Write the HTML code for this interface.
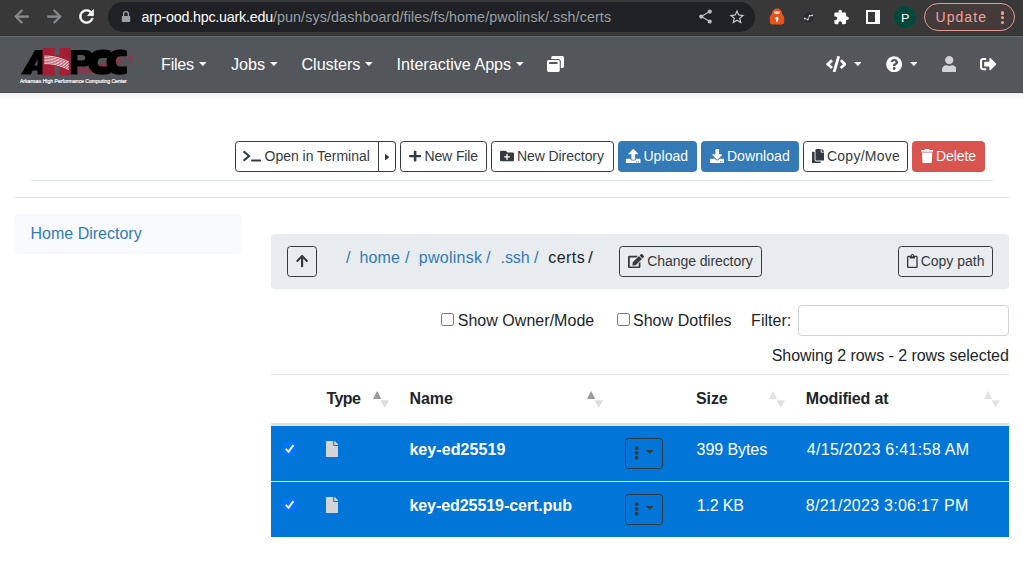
<!DOCTYPE html>
<html>
<head>
<meta charset="utf-8">
<title>Dashboard - Files</title>
<style>
*{box-sizing:border-box;margin:0;padding:0}
html,body{width:1023px;height:581px;overflow:hidden;background:#fff}
body{font-family:"Liberation Sans",sans-serif;font-size:16px;color:#212529;position:relative}
.abs{position:absolute}
.t{position:absolute;white-space:nowrap;line-height:1;font-family:"Liberation Sans",sans-serif}
.box{position:absolute}
.btn{position:absolute;border:1px solid #343a40;border-radius:3.5px;background:#fff}
.caret{position:absolute;width:0;height:0;border-left:4.2px solid transparent;border-right:4.2px solid transparent;border-top:4.4px solid #fff}
.hr{position:absolute;height:1px;background:#dee2e6}
.cb{position:absolute;width:13px;height:13px;border:1px solid #767676;border-radius:2.5px;background:#fff}
.cbc{position:absolute;width:13px;height:13px;border-radius:2.5px;background:#0075ff}
</style>
</head>
<body>

<div class="box" style="left:0;top:0;width:1023px;height:36px;background:#383838"></div>
<div class="box" style="left:0;top:35px;width:1023px;height:1px;background:#313131"></div>
<div class="box" style="left:108px;top:2px;width:647px;height:30px;border-radius:15px;background:#202124"></div>
<svg class="abs" style="left:11.2px;top:6px" width="21" height="21" viewBox="0 0 24 24"><path fill="#8a8b8e" stroke="#8a8b8e" stroke-width="0.6" d="M20 11H7.830l5.590-5.590L12 4l-8 8 8 8 1.410-1.410L7.830 13H20v-2z"/></svg>
<svg class="abs" style="left:44px;top:6px" width="21" height="21" viewBox="0 0 24 24"><path fill="#8a8b8e" stroke="#8a8b8e" stroke-width="0.6" d="M12 4l-1.410 1.410L16.170 11H4v2h12.170l-5.580 5.590L12 20l8-8z"/></svg>
<svg class="abs" style="left:75.5px;top:6.3px" width="21" height="21" viewBox="0 0 24 24"><path fill="#ffffff" stroke="#ffffff" stroke-width="0.7" d="M17.650 6.350C16.200 4.900 14.210 4 12 4c-4.420 0-7.990 3.580-7.990 8s3.570 8 7.990 8c3.730 0 6.840-2.550 7.730-6h-2.080c-.82 2.330-3.040 4-5.650 4-3.310 0-6-2.690-6-6s2.690-6 6-6c1.660 0 3.140.69 4.220 1.780L13 11h7V4l-2.350 2.350z"/></svg>
<svg class="abs" style="left:120px;top:10px" width="12" height="14" viewBox="0 0 12 14"><path fill="#9aa0a6" d="M2.600 5.900h6.800c.5 0 .8.300.8.800v4.500c0 .5-.3.800-.8.800H2.600c-.5 0-.8-.3-.8-.8V6.700c0-.5.300-.800.8-.800z"/><path fill="none" stroke="#9aa0a6" stroke-width="1.300" d="M3.600 6V4a2.400 2.400 0 0 1 4.800 0V6"/></svg>
<svg class="abs" style="left:696.5px;top:8.3px" width="17" height="17" viewBox="0 0 24 24"><path fill="#b9bcc0" stroke="#b9bcc0" stroke-width="0" d="M18 16.080c-.76 0-1.440.3-1.960.77L8.910 12.700c.05-.23.09-.46.09-.7s-.04-.47-.09-.7l7.050-4.110c.54.5 1.250.81 2.040.81 1.660 0 3-1.340 3-3s-1.340-3-3-3-3 1.340-3 3c0 .24.04.47.09.7L8.040 9.810C7.500 9.310 6.790 9 6 9c-1.660 0-3 1.340-3 3s1.340 3 3 3c.79 0 1.500-.31 2.040-.81l7.120 4.160c-.05.21-.08.43-.08.65 0 1.610 1.310 2.920 2.920 2.920 1.610 0 2.920-1.310 2.920-2.920s-1.310-2.920-2.920-2.920z"/></svg>
<svg class="abs" style="left:728px;top:8px" width="18" height="18" viewBox="0 0 24 24"><path fill="#c4c7cb" stroke="#c4c7cb" stroke-width="0" d="M22 9.240l-7.190-.62L12 2 9.190 8.630 2 9.240l5.460 4.730L5.820 21 12 17.270 18.180 21l-1.630-7.030L22 9.240zM12 15.400l-3.760 2.270 1-4.280-3.320-2.880 4.380-.38L12 6.100l1.710 4.040 4.380.38-3.320 2.880 1 4.280L12 15.400z"/></svg>
<svg class="abs" style="left:769px;top:8px" width="16" height="17" viewBox="0 0 16 17"><path fill="#e5541f" d="M2.800 6.500C2.800 2.900 5 0.600 8 0.600s5.200 2.300 5.200 5.900c1.300.5 2 1.600 2 3.100v4.300c0 1.500-1 2.500-2.400 2.500H3.200C1.800 16.400.8 15.400.8 13.900V9.600c0-1.500.7-2.600 2-3.100z"/><rect x="5" y="3.300" width="6" height="2.600" rx="1.300" fill="#f7c9b6"/><circle cx="8" cy="10.300" r="1.500" fill="#fff"/><rect x="7.250" y="10.600" width="1.500" height="3.200" fill="#fff"/></svg>
<svg class="abs" style="left:802px;top:10.500px" width="13" height="13" viewBox="0 0 13 13"><circle cx="6.500" cy="6.500" r="5.700" fill="#2b2c2f" stroke="#46474a" stroke-width=".6"/><path d="M2.800 7.400L5.800 8.600 7.600 4.700 10.200 4.300" fill="none" stroke="#c9c9c9" stroke-width=".9"/><circle cx="2.900" cy="7.400" r=".9" fill="#d8d8d8"/><circle cx="5.800" cy="8.600" r=".9" fill="#d8d8d8"/><circle cx="7.600" cy="4.700" r=".9" fill="#d8d8d8"/><circle cx="10.200" cy="4.300" r=".9" fill="#d8d8d8"/></svg>
<svg class="abs" style="left:832.5px;top:9px" width="16.5" height="16.5" viewBox="0 0 24 24"><path fill="#ffffff" stroke="#ffffff" stroke-width="0" d="M20.500 11H19V7c0-1.100-.9-2-2-2h-4V3.500C13 2.120 11.880 1 10.500 1S8 2.120 8 3.500V5H4c-1.100 0-1.990.9-1.990 2v3.800H3.500c1.490 0 2.700 1.210 2.700 2.700s-1.210 2.700-2.700 2.700H2V20c0 1.100.9 2 2 2h3.800v-1.500c0-1.490 1.210-2.700 2.700-2.700 1.490 0 2.700 1.210 2.700 2.700V22H17c1.100 0 2-.9 2-2v-4h1.500c1.380 0 2.500-1.120 2.500-2.500S21.880 11 20.500 11z"/></svg>
<div class="box" style="left:866px;top:10px;width:14.400px;height:14px;background:#fff"></div>
<div class="box" style="left:868px;top:12px;width:7.200px;height:10px;background:#383838"></div>
<div class="box" style="left:894px;top:6px;width:22.200px;height:22.200px;border-radius:50%;background:#03483d"></div>
<div class="box" style="left:924px;top:3px;width:91px;height:28px;border-radius:14px;border:1px solid #e39c94;background:#453a3a"></div>
<div class="box" style="left:1001.200px;top:11.4px;width:3.200px;height:3.200px;border-radius:50%;background:#f0a198"></div>
<div class="box" style="left:1001.200px;top:16.1px;width:3.200px;height:3.200px;border-radius:50%;background:#f0a198"></div>
<div class="box" style="left:1001.200px;top:20.8px;width:3.200px;height:3.200px;border-radius:50%;background:#f0a198"></div>
<div class="box" style="left:0;top:36px;width:1023px;height:57px;background:#53565a"></div>
<div class="box" style="left:0;top:36px;width:1023px;height:1px;background:#68696b"></div>
<div class="box" style="left:0;top:92px;width:1023px;height:1px;background:#484b4f"></div>
<div class="box" style="left:0;top:93px;width:1023px;height:7px;background:linear-gradient(#f1f1f1,#f6f6f6 30%,#ffffff)"></div>
<svg class="abs" style="left:0;top:36px" width="150" height="57" viewBox="0 36 150 57">
<!-- red swoosh lines behind PCC -->
<path d="M77.300 67.00C88 70.60 98 65.60 106 62.30S124 57.20 133 56.60" stroke="#b3233f" stroke-width="0.700" fill="none"/><path d="M77.300 68.35C88 71.95 98 66.75 106 63.45S124 59.45 133 58.85" stroke="#b3233f" stroke-width="0.700" fill="none"/><path d="M77.300 69.70C88 73.30 98 67.90 106 64.60S124 61.70 133 61.10" stroke="#b3233f" stroke-width="0.700" fill="none"/><path d="M77.300 71.05C88 74.65 98 69.05 106 65.75S124 63.95 133 63.35" stroke="#b3233f" stroke-width="0.700" fill="none"/><path d="M77.300 72.40C88 76.00 98 70.20 106 66.90S124 66.20 133 65.60" stroke="#b3233f" stroke-width="0.700" fill="none"/>
<!-- A -->
<path fill="#000" fill-rule="evenodd" d="M20.900 74.400L35.200 49.900H47V74.400H37.500V70.500H32.700L30.900 74.400ZM34.300 65.600H37.500V59.200Z"/>
<!-- P -->
<path fill="#000" fill-rule="evenodd" d="M70.600 49.900H84.500C90.500 49.900 93.400 53.200 93.400 58.200C93.400 63.200 90.500 66.400 84.500 66.400H77.400V74.400H70.600ZM77.400 54.900V60.400H82.300C84.400 60.400 85.400 59.400 85.400 57.650C85.400 55.900 84.400 54.900 82.300 54.900Z"/>
<!-- C1 -->
<path fill="#000" d="M110.500 57.900V50.600C108 49.900 105.500 49.500 102.500 49.500C93.500 49.500 88 54.500 88 62.200C88 69.900 93.500 74.800 102.500 74.800C105.500 74.800 108 74.400 110.500 73.600V66.600H102C99.300 66.600 97.600 64.900 97.600 62.250C97.600 59.600 99.300 57.900 102 57.900Z"/>
<!-- C2 -->
<path fill="#000" d="M126.900 56.300V50.600C124.800 49.900 122.500 49.500 119.800 49.500C111.500 49.500 106.500 54.500 106.500 62.200C106.500 69.900 111.500 74.800 119.800 74.800C122.500 74.800 124.800 74.400 126.900 73.600V66.600H120.500C117.600 66.600 115.900 64.700 115.900 61.450C115.900 58.200 117.600 56.300 120.500 56.300Z"/>
<!-- H (red) -->
<path fill="#a51e36" d="M42.500 47.900H54.700V55.600H59.600V47.900H70.600V75.600H59.600V66.400H54.700V75.600H42.500Z"/>
<!-- white swoosh lines over H -->
<path d="M44.300 56.10C52 55.90 60 57.60 68.800 61.90" stroke="#f6e3e6" stroke-width="0.95" fill="none"/><path d="M44.300 57.60C52 57.40 60 59.10 68.800 63.45" stroke="#f6e3e6" stroke-width="0.95" fill="none"/><path d="M44.300 59.10C52 58.90 60 60.60 68.800 65.00" stroke="#f6e3e6" stroke-width="0.95" fill="none"/><path d="M44.300 60.60C52 60.40 60 62.10 68.800 66.55" stroke="#f6e3e6" stroke-width="0.95" fill="none"/><path d="M44.300 62.10C52 61.90 60 63.60 68.800 68.10" stroke="#f6e3e6" stroke-width="0.95" fill="none"/><path d="M44.300 63.60C52 63.40 60 65.10 68.800 69.65" stroke="#f6e3e6" stroke-width="0.95" fill="none"/>
<text x="19.900" y="83.300" font-family="Liberation Sans, sans-serif" font-size="5.700" fill="#ffffff" textLength="106.900" lengthAdjust="spacingAndGlyphs" stroke="#ffffff" stroke-width="0.2">Arkansas High Performance Computing Center</text>
</svg>
<svg class="abs" style="left:199.4px;top:62px" width="7.7" height="4.1" viewBox="0 0 7.7 4.1"><path fill="#ffffff" d="M0 0H7.7L3.85 4.1Z"/></svg>
<svg class="abs" style="left:270px;top:62px" width="7.7" height="4.1" viewBox="0 0 7.7 4.1"><path fill="#ffffff" d="M0 0H7.7L3.85 4.1Z"/></svg>
<svg class="abs" style="left:365px;top:62px" width="7.7" height="4.1" viewBox="0 0 7.7 4.1"><path fill="#ffffff" d="M0 0H7.7L3.85 4.1Z"/></svg>
<svg class="abs" style="left:516px;top:62px" width="7.7" height="4.1" viewBox="0 0 7.7 4.1"><path fill="#ffffff" d="M0 0H7.7L3.85 4.1Z"/></svg>
<svg class="abs" style="left:547px;top:56px" width="17" height="16" viewBox="0 0 512 512" preserveAspectRatio="none"><path fill="#ffffff" d="M512 48v288c0 26.500-21.500 48-48 48h-48V176c0-44.100-35.900-80-80-80H128V48c0-26.500 21.500-48 48-48h288c26.500 0 48 21.500 48 48zM384 176v288c0 26.500-21.500 48-48 48H48c-26.500 0-48-21.500-48-48V176c0-26.500 21.500-48 48-48h288c26.500 0 48 21.500 48 48zm-68 28c0-6.600-5.400-12-12-12H76c-6.600 0-12 5.400-12 12v52h252v-52z"/></svg>
<svg class="abs" style="left:825.6px;top:56px" width="20.8" height="16.3" viewBox="0 0 640 512" preserveAspectRatio="none"><path fill="#ffffff" d="M278.900 511.500l-61-17.700c-6.400-1.800-10-8.500-8.200-14.900L346.200 8.700c1.800-6.400 8.500-10 14.900-8.200l61 17.700c6.400 1.800 10 8.500 8.200 14.900L293.800 503.300c-1.900 6.400-8.500 10.100-14.900 8.200zm-114-112.200l43.500-46.400c4.600-4.900 4.300-12.700-.8-17.200L117 256l90.600-79.700c5.100-4.500 5.500-12.300.8-17.200l-43.500-46.400c-4.500-4.800-12.100-5.100-17-.5L3.800 247.200c-5.100 4.700-5.100 12.800 0 17.500l144.100 135.100c4.900 4.600 12.500 4.400 17-.5zm327.200.6l144.100-135.100c5.100-4.700 5.100-12.800 0-17.500L492.100 112.100c-4.800-4.500-12.400-4.300-17 .5L431.600 159c-4.600 4.900-4.300 12.700.8 17.200L523 256l-90.600 79.700c-5.100 4.500-5.500 12.300-.8 17.200l43.500 46.400c4.500 4.900 12.100 5.100 17 .6z"/></svg>
<svg class="abs" style="left:853.8px;top:62px" width="7.7" height="4.1" viewBox="0 0 7.7 4.1"><path fill="#ffffff" d="M0 0H7.7L3.85 4.1Z"/></svg>
<svg class="abs" style="left:885.7px;top:55.8px" width="16.4" height="16.6" viewBox="0 0 512 512" preserveAspectRatio="none"><path fill="#ffffff" d="M504 256c0 136.997-111.043 248-248 248S8 392.997 8 256C8 119.083 119.043 8 256 8s248 111.083 248 248zM262.655 90c-54.497 0-89.255 22.957-116.549 63.758-3.536 5.286-2.353 12.415 2.715 16.258l34.699 26.310c5.205 3.947 12.621 3.008 16.665-2.122 17.864-22.658 30.113-35.797 57.303-35.797 20.429 0 45.698 13.148 45.698 32.958 0 14.976-12.363 22.667-32.534 33.976C247.128 238.528 216 254.941 216 296v4c0 6.627 5.373 12 12 12h56c6.627 0 12-5.373 12-12v-1.333c0-28.462 83.186-29.647 83.186-106.667 0-58.002-60.165-102-116.531-102zM256 338c-25.365 0-46 20.635-46 46 0 25.364 20.635 46 46 46s46-20.636 46-46c0-25.365-20.635-46-46-46z"/></svg>
<svg class="abs" style="left:909.7px;top:62px" width="7.7" height="4.1" viewBox="0 0 7.7 4.1"><path fill="#ffffff" d="M0 0H7.7L3.85 4.1Z"/></svg>
<svg class="abs" style="left:941.7px;top:56px" width="14.5" height="16.3" viewBox="0 0 448 512" preserveAspectRatio="none"><path fill="#d2d3d4" d="M224 256c70.700 0 128-57.300 128-128S294.700 0 224 0 96 57.300 96 128s57.300 128 128 128zm89.600 32h-16.700c-22.200 10.200-46.900 16-72.900 16s-50.600-5.800-72.900-16h-16.700C60.200 288 0 348.200 0 422.400V464c0 26.500 21.500 48 48 48h352c26.500 0 48-21.500 48-48v-41.600c0-74.200-60.200-134.400-134.400-134.400z"/></svg>
<svg class="abs" style="left:979.6px;top:56px" width="16.6" height="16.3" viewBox="0 0 512 512" preserveAspectRatio="none"><path fill="#ffffff" d="M497 273L329 441c-15 15-41 4.500-41-17v-96H152c-13.300 0-24-10.700-24-24v-96c0-13.300 10.700-24 24-24h136V88c0-21.400 25.900-32 41-17l168 168c9.300 9.400 9.300 24.600 0 34zM192 436v-40c0-6.600-5.400-12-12-12H96c-17.700 0-32-14.300-32-32V160c0-17.700 14.300-32 32-32h84c6.600 0 12-5.400 12-12V76c0-6.600-5.400-12-12-12H96c-53 0-96 43-96 96v192c0 53 43 96 96 96h84c6.600 0 12-5.400 12-12z"/></svg>
<div class="btn" style="left:235px;top:141px;width:144px;height:31px;border-radius:3.500px 0 0 3.500px;"></div>
<div class="btn" style="left:378px;top:141px;width:18px;height:31px;border-radius:0 3.500px 3.500px 0;"></div>
<div class="btn" style="left:400.4px;top:141px;width:86.4px;height:31px;"></div>
<div class="btn" style="left:491.2px;top:141px;width:122.4px;height:31px;"></div>
<div class="btn" style="left:618.2px;top:141px;width:78.6px;height:31px;background:#337ab7;border-color:#337ab7;"></div>
<div class="btn" style="left:701.1px;top:141px;width:97.8px;height:31px;background:#337ab7;border-color:#337ab7;"></div>
<div class="btn" style="left:803px;top:141px;width:105px;height:31px;"></div>
<div class="btn" style="left:912px;top:141px;width:73px;height:31px;background:#d9534f;border-color:#d9534f;"></div>
<svg class="abs" style="left:243.3px;top:150.3px" width="18" height="12.2" viewBox="0 0 640 512" preserveAspectRatio="none"><path fill="#343a40" d="M257.981 272.971L63.638 467.314c-9.373 9.373-24.569 9.373-33.941 0L7.029 444.647c-9.357-9.357-9.375-24.522-.040-33.901L161.011 256 6.990 101.255c-9.335-9.379-9.317-24.544.040-33.901l22.667-22.667c9.373-9.373 24.569-9.373 33.941 0L257.981 239.030c9.373 9.372 9.373 24.568 0 33.941zM640 456v-32c0-13.255-10.745-24-24-24H312c-13.255 0-24 10.745-24 24v32c0 13.255 10.745 24 24 24h304c13.255 0 24-10.745 24-24z"/></svg>
<svg class="abs" style="left:384.8px;top:152px" width="4.6" height="10.2" viewBox="0 0 192 512" preserveAspectRatio="none"><path fill="#343a40" d="M0 384.662V127.338c0-17.818 21.543-26.741 34.142-14.142l128.662 128.662c7.810 7.810 7.810 20.474 0 28.284L34.142 398.804C21.543 411.404 0 402.480 0 384.662z"/></svg>
<svg class="abs" style="left:409px;top:150px" width="12.2" height="12.2" viewBox="0 0 448 512" preserveAspectRatio="none"><path fill="#343a40" d="M416 208H272V64c0-17.67-14.33-32-32-32h-32c-17.67 0-32 14.33-32 32v144H32c-17.67 0-32 14.33-32 32v32c0 17.67 14.33 32 32 32h144v144c0 17.67 14.33 32 32 32h32c17.67 0 32-14.33 32-32V304h144c17.67 0 32-14.33 32-32v-32c0-17.67-14.33-32-32-32z"/></svg>
<svg class="abs" style="left:499.8px;top:149px" width="14" height="14" viewBox="0 0 512 512" preserveAspectRatio="none"><path fill="#343a40" d="M464 128H272l-64-64H48C21.490 64 0 85.490 0 112v288c0 26.510 21.490 48 48 48h416c26.510 0 48-21.490 48-48V176c0-26.510-21.490-48-48-48zm-96 168c0 8.840-7.160 16-16 16h-72v72c0 8.840-7.160 16-16 16h-16c-8.840 0-16-7.160-16-16v-72h-72c-8.840 0-16-7.160-16-16v-16c0-8.840 7.160-16 16-16h72v-72c0-8.840 7.160-16 16-16h16c8.840 0 16 7.160 16 16v72h72c8.840 0 16 7.160 16 16v16z"/></svg>
<svg class="abs" style="left:626.4px;top:149px" width="14.5" height="14.2" viewBox="0 0 512 512" preserveAspectRatio="none"><path fill="#ffffff" d="M296 384h-80c-13.300 0-24-10.700-24-24V192h-87.700c-17.800 0-26.700-21.500-14.100-34.100L242.300 5.700c7.500-7.500 19.800-7.500 27.300 0l152.200 152.200c12.600 12.600 3.700 34.100-14.100 34.100H320v168c0 13.300-10.700 24-24 24zm216-8v112c0 13.300-10.700 24-24 24H24c-13.300 0-24-10.700-24-24V376c0-13.300 10.700-24 24-24h136v8c0 30.900 25.100 56 56 56h80c30.900 0 56-25.100 56-56v-8h136c13.300 0 24 10.700 24 24zm-124 88c0-11-9-20-20-20s-20 9-20 20 9 20 20 20 20-9 20-20zm64 0c0-11-9-20-20-20s-20 9-20 20 9 20 20 20 20-9 20-20z"/></svg>
<svg class="abs" style="left:709.7px;top:149px" width="14.5" height="14.2" viewBox="0 0 512 512" preserveAspectRatio="none"><path fill="#ffffff" d="M216 0h80c13.300 0 24 10.700 24 24v168h87.700c17.800 0 26.700 21.500 14.100 34.100L269.700 378.300c-7.500 7.500-19.800 7.500-27.300 0L90.100 226.100c-12.600-12.600-3.700-34.100 14.100-34.100H192V24c0-13.300 10.700-24 24-24zm296 376v112c0 13.300-10.700 24-24 24H24c-13.300 0-24-10.700-24-24V376c0-13.300 10.700-24 24-24h146.700l49 49c20.100 20.100 52.500 20.100 72.600 0l49-49H488c13.300 0 24 10.700 24 24zm-124 88c0-11-9-20-20-20s-20 9-20 20 9 20 20 20 20-9 20-20zm64 0c0-11-9-20-20-20s-20 9-20 20 9 20 20 20 20-9 20-20z"/></svg>
<svg class="abs" style="left:811.9px;top:148.8px" width="12.2" height="14.2" viewBox="0 0 448 512" preserveAspectRatio="none"><path fill="#343a40" d="M320 448v40c0 13.255-10.745 24-24 24H24c-13.255 0-24-10.745-24-24V120c0-13.255 10.745-24 24-24h72v296c0 30.879 25.121 56 56 56h168zm0-344V0H152c-13.255 0-24 10.745-24 24v368c0 13.255 10.745 24 24 24h272c13.255 0 24-10.745 24-24V128H344c-13.200 0-24-10.800-24-24zm120.971-31.029L375.029 7.029A24 24 0 0 0 358.059 0H352v96h96v-6.059a24 24 0 0 0-7.029-16.970z"/></svg>
<svg class="abs" style="left:920.5px;top:148.8px" width="12.2" height="14.2" viewBox="0 0 448 512" preserveAspectRatio="none"><path fill="#ffffff" d="M432 32H312l-9.400-18.700A24 24 0 0 0 281.100 0H166.800a23.720 23.720 0 0 0-21.400 13.300L136 32H16A16 16 0 0 0 0 48v32a16 16 0 0 0 16 16h416a16 16 0 0 0 16-16V48a16 16 0 0 0-16-16zM53.200 467a48 48 0 0 0 47.900 45h245.800a48 48 0 0 0 47.900-45L416 128H32z"/></svg>
<div class="hr" style="left:31px;top:180px;width:962px"></div>
<div class="hr" style="left:15px;top:197px;width:994px"></div>
<div class="box" style="left:15px;top:214px;width:226px;height:40px;border-radius:4px;background:#f8f9fa"></div>
<div class="box" style="left:271px;top:234px;width:738px;height:55px;border-radius:4px;background:#e9ecef"></div>
<div class="btn" style="left:287px;top:246px;width:30px;height:31px;background:transparent"></div>
<svg class="abs" style="left:295.9px;top:254px" width="12.2" height="14" viewBox="0 0 448 512" preserveAspectRatio="none"><path fill="#343a40" d="M34.900 289.500l-22.200-22.200c-9.400-9.400-9.400-24.600 0-33.900L207 39c9.400-9.400 24.600-9.400 33.900 0l194.300 194.300c9.400 9.400 9.400 24.600 0 33.900L413 289.400c-9.500 9.500-25 9.300-34.300-.4L264 168.600V456c0 13.300-10.700 24-24 24h-32c-13.300 0-24-10.700-24-24V168.600L69.200 289.100c-9.300 9.800-24.800 10-34.300.4z"/></svg>
<div class="btn" style="left:619px;top:246px;width:143px;height:31px;background:transparent"></div>
<svg class="abs" style="left:628.4px;top:253.6px" width="16" height="14.2" viewBox="0 0 576 512" preserveAspectRatio="none"><path fill="#343a40" d="M402.600 83.200l90.200 90.200c3.800 3.800 3.800 10 0 13.800L274.400 405.600l-92.800 10.300c-12.400 1.400-22.900-9.100-21.500-21.500l10.300-92.800L388.800 83.200c3.800-3.800 10-3.800 13.800 0zm162-22.900l-48.800-48.800c-15.200-15.200-39.900-15.200-55.200 0l-35.400 35.400c-3.800 3.800-3.800 10 0 13.800l90.200 90.200c3.800 3.800 10 3.800 13.800 0l35.400-35.400c15.200-15.300 15.200-40 0-55.200zM384 346.200V448H64V128h229.800c3.200 0 6.200-1.300 8.500-3.500l40-40c7.600-7.600 2.200-20.500-8.500-20.500H48C21.500 64 0 85.500 0 112v352c0 26.500 21.500 48 48 48h352c26.500 0 48-21.500 48-48V306.200c0-10.700-12.900-16-20.500-8.500l-40 40c-2.200 2.300-3.500 5.300-3.500 8.500z"/></svg>
<div class="btn" style="left:898.300px;top:246px;width:94.400px;height:31px;background:transparent"></div>
<svg class="abs" style="left:907.1px;top:253.5px" width="10.7" height="14.2" viewBox="0 0 384 512" preserveAspectRatio="none"><path fill="#343a40" d="M336 64h-80c0-35.300-28.700-64-64-64s-64 28.700-64 64H48C21.500 64 0 85.500 0 112v352c0 26.500 21.500 48 48 48h288c26.500 0 48-21.500 48-48V112c0-26.500-21.500-48-48-48zM192 40c13.300 0 24 10.700 24 24s-10.700 24-24 24-24-10.700-24-24 10.700-24 24-24zm144 418c0 3.300-2.700 6-6 6H54c-3.300 0-6-2.700-6-6V118c0-3.300 2.700-6 6-6h42v36c0 6.600 5.400 12 12 12h168c6.600 0 12-5.400 12-12v-36h42c3.300 0 6 2.700 6 6z"/></svg>
<div class="cb" style="left:441px;top:313px"></div>
<div class="cb" style="left:617px;top:313px"></div>
<div class="box" style="left:798px;top:305px;width:211px;height:31px;border:1px solid #ced4da;border-radius:4px;background:#fff"></div>
<div class="hr" style="left:271px;top:374px;width:738px"></div>
<div class="box" style="left:271px;top:423px;width:738px;height:2.600px;background:#dee2e6"></div>
<div class="box" style="left:271px;top:425.600px;width:738px;height:111.400px;background:#0275d8"></div>
<div class="box" style="left:271px;top:481px;width:738px;height:1px;background:#dde3ea"></div>
<svg class="abs" style="left:372.9px;top:391px" width="17" height="17" viewBox="0 0 17 17"><path fill="#999999" d="M0 8L4.100 0L8.200 8Z"/><path fill="#dddddd" d="M7.500 9.300L15.900 9.300L11.700 16.800Z"/></svg>
<svg class="abs" style="left:587.3px;top:391px" width="17" height="17" viewBox="0 0 17 17"><path fill="#999999" d="M0 8L4.100 0L8.200 8Z"/><path fill="#dddddd" d="M7.500 9.300L15.900 9.300L11.700 16.800Z"/></svg>
<svg class="abs" style="left:769.1px;top:391px" width="17" height="17" viewBox="0 0 17 17"><path fill="#e2e2e2" d="M0 8L4.100 0L8.200 8Z"/><path fill="#e2e2e2" d="M7.500 9.300L15.900 9.300L11.700 16.800Z"/></svg>
<svg class="abs" style="left:983.9px;top:391px" width="17" height="17" viewBox="0 0 17 17"><path fill="#e2e2e2" d="M0 8L4.100 0L8.200 8Z"/><path fill="#e2e2e2" d="M7.500 9.300L15.900 9.300L11.700 16.800Z"/></svg>
<div class="cbc" style="left:283px;top:441.8px"></div>
<svg class="abs" style="left:283px;top:441.8px" width="13" height="13" viewBox="0 0 13 13"><path d="M2.700 6.900L5.600 9.700L10.500 3" fill="none" stroke="#fff" stroke-width="2"/></svg>
<svg class="abs" style="left:325.8px;top:440.7px" width="12.4" height="16.2" viewBox="0 0 384 512" preserveAspectRatio="none"><path fill="#d3d4d5" d="M224 136V0H24C10.7 0 0 10.7 0 24v464c0 13.3 10.7 24 24 24h336c13.3 0 24-10.7 24-24V160H248c-13.2 0-24-10.800-24-24zm160-14.100v6.100H256V0h6.100c6.400 0 12.500 2.500 17 7l97.900 98c4.500 4.500 7 10.600 7 16.900z"/></svg>
<div class="btn" style="left:625px;top:437.9px;width:37.700px;height:31px;background:transparent"></div>
<svg class="abs" style="left:634px;top:446.2px" width="5.2" height="13.9" viewBox="0 0 192 512" preserveAspectRatio="none"><path fill="#343a40" d="M96 184c39.800 0 72 32.200 72 72s-32.200 72-72 72-72-32.200-72-72 32.200-72 72-72zM24 80c0 39.800 32.200 72 72 72s72-32.200 72-72S135.800 8 96 8 24 40.200 24 80zm0 352c0 39.800 32.200 72 72 72s72-32.200 72-72-32.200-72-72-72-72 32.200-72 72z"/></svg>
<svg class="abs" style="left:646.3px;top:449.9px" width="7.5" height="3.9" viewBox="0 0 7.5 3.9"><path fill="#343a40" d="M0 0H7.5L3.75 3.9Z"/></svg>
<div class="cbc" style="left:283px;top:497.7px"></div>
<svg class="abs" style="left:283px;top:497.7px" width="13" height="13" viewBox="0 0 13 13"><path d="M2.700 6.900L5.600 9.700L10.500 3" fill="none" stroke="#fff" stroke-width="2"/></svg>
<svg class="abs" style="left:325.8px;top:496.59999999999997px" width="12.4" height="16.2" viewBox="0 0 384 512" preserveAspectRatio="none"><path fill="#d3d4d5" d="M224 136V0H24C10.7 0 0 10.7 0 24v464c0 13.3 10.7 24 24 24h336c13.3 0 24-10.7 24-24V160H248c-13.2 0-24-10.800-24-24zm160-14.100v6.100H256V0h6.100c6.400 0 12.500 2.500 17 7l97.900 98c4.500 4.500 7 10.600 7 16.900z"/></svg>
<div class="btn" style="left:625px;top:493.8px;width:37.700px;height:31px;background:transparent"></div>
<svg class="abs" style="left:634px;top:502.09999999999997px" width="5.2" height="13.9" viewBox="0 0 192 512" preserveAspectRatio="none"><path fill="#343a40" d="M96 184c39.800 0 72 32.200 72 72s-32.200 72-72 72-72-32.200-72-72 32.200-72 72-72zM24 80c0 39.800 32.200 72 72 72s72-32.200 72-72S135.800 8 96 8 24 40.200 24 80zm0 352c0 39.800 32.200 72 72 72s72-32.200 72-72-32.200-72-72-72-72 32.200-72 72z"/></svg>
<svg class="abs" style="left:646.3px;top:505.8px" width="7.5" height="3.9" viewBox="0 0 7.5 3.9"><path fill="#343a40" d="M0 0H7.5L3.75 3.9Z"/></svg>
<div class="t" id="url1" style="left:141.50px;top:10.00px;font-size:14.3px;font-weight:400;color:#ffffff;letter-spacing:-0.226px">arp-ood.hpc.uark.edu</div>
<div class="t" id="url2" style="left:272.90px;top:10.00px;font-size:14.3px;font-weight:400;color:#9aa0a6;letter-spacing:0.102px">/pun/sys/dashboard/files/fs/home/pwolinsk/.ssh/certs</div>
<div class="t" id="upd" style="left:935.50px;top:10.00px;font-size:14px;font-weight:400;color:#eea29a;letter-spacing:1.060px">Update</div>
<div class="t" id="avP" style="left:900.70px;top:12.50px;font-size:11.5px;font-weight:400;color:#ffffff;transform:scaleX(1.100);transform-origin:0 0">P</div>
<div class="t" id="n1" style="left:161.00px;top:56.00px;font-size:16.2px;font-weight:400;color:#ffffff;letter-spacing:-0.250px">Files</div>
<div class="t" id="n2" style="left:231.00px;top:56.00px;font-size:16.2px;font-weight:400;color:#ffffff;letter-spacing:0.000px">Jobs</div>
<div class="t" id="n3" style="left:301.50px;top:56.00px;font-size:16.2px;font-weight:400;color:#ffffff;letter-spacing:-0.071px">Clusters</div>
<div class="t" id="n4" style="left:396.50px;top:56.00px;font-size:16.2px;font-weight:400;color:#ffffff;letter-spacing:-0.033px">Interactive Apps</div>
<div class="t" id="b1" style="left:264.60px;top:149.00px;font-size:14px;font-weight:400;color:#343a40;letter-spacing:-0.027px">Open in Terminal</div>
<div class="t" id="b2" style="left:424.40px;top:149.00px;font-size:14px;font-weight:400;color:#343a40;letter-spacing:-0.100px">New File</div>
<div class="t" id="b3" style="left:517.00px;top:149.00px;font-size:14px;font-weight:400;color:#343a40;letter-spacing:-0.083px">New Directory</div>
<div class="t" id="b4" style="left:643.40px;top:149.00px;font-size:14px;font-weight:400;color:#ffffff;letter-spacing:0.080px">Upload</div>
<div class="t" id="b5" style="left:726.90px;top:149.00px;font-size:14px;font-weight:400;color:#ffffff;letter-spacing:0.086px">Download</div>
<div class="t" id="b6" style="left:827.00px;top:149.00px;font-size:14px;font-weight:400;color:#343a40;letter-spacing:0.237px">Copy/Move</div>
<div class="t" id="b7" style="left:936.00px;top:149.00px;font-size:14px;font-weight:400;color:#ffffff;letter-spacing:-0.100px">Delete</div>
<div class="t" id="home" style="left:30.50px;top:226.00px;font-size:16px;font-weight:400;color:#337ab7;letter-spacing:0.000px">Home Directory</div>
<div class="t" id="c0" style="left:345.50px;top:250.00px;font-size:16px;font-weight:400;color:#337ab7;transform:scaleX(1.020);transform-origin:0 0">/</div>
<div class="t" id="c1" style="left:359.40px;top:250.00px;font-size:16px;font-weight:400;color:#337ab7;letter-spacing:0.167px">home</div>
<div class="t" id="c1s" style="left:404.60px;top:250.00px;font-size:16px;font-weight:400;color:#337ab7;transform:scaleX(1.020);transform-origin:0 0">/</div>
<div class="t" id="c2" style="left:418.80px;top:250.00px;font-size:16px;font-weight:400;color:#337ab7;letter-spacing:0.257px">pwolinsk</div>
<div class="t" id="c2s" style="left:486.20px;top:250.00px;font-size:16px;font-weight:400;color:#337ab7;transform:scaleX(1.020);transform-origin:0 0">/</div>
<div class="t" id="c3" style="left:500.50px;top:250.00px;font-size:16px;font-weight:400;color:#337ab7;letter-spacing:-0.067px">.ssh</div>
<div class="t" id="c3s" style="left:534.30px;top:250.00px;font-size:16px;font-weight:400;color:#337ab7;transform:scaleX(1.020);transform-origin:0 0">/</div>
<div class="t" id="c4" style="left:548.20px;top:250.00px;font-size:16px;font-weight:400;color:#212529;letter-spacing:0.450px">certs</div>
<div class="t" id="c4s" style="left:588.30px;top:250.00px;font-size:16px;font-weight:400;color:#212529;transform:scaleX(1.100);transform-origin:0 0">/</div>
<div class="t" id="cd" style="left:647.30px;top:254.00px;font-size:14px;font-weight:400;color:#343a40;letter-spacing:-0.080px">Change directory</div>
<div class="t" id="cp" style="left:920.70px;top:254.00px;font-size:14px;font-weight:400;color:#343a40;letter-spacing:0.000px">Copy path</div>
<div class="t" id="so" style="left:457.70px;top:313.00px;font-size:16px;font-weight:400;color:#212529;letter-spacing:0.036px">Show Owner/Mode</div>
<div class="t" id="sd" style="left:632.90px;top:313.00px;font-size:16px;font-weight:400;color:#212529;letter-spacing:0.075px">Show Dotfiles</div>
<div class="t" id="fl" style="left:751.10px;top:313.00px;font-size:16px;font-weight:400;color:#212529;letter-spacing:0.033px">Filter:</div>
<div class="t" id="sh" style="left:771.70px;top:348.00px;font-size:16px;font-weight:400;color:#212529;letter-spacing:-0.039px">Showing 2 rows - 2 rows selected</div>
<div class="t" id="h1" style="left:326.40px;top:391.00px;font-size:16px;font-weight:700;color:#212529;letter-spacing:-0.533px">Type</div>
<div class="t" id="h2" style="left:409.60px;top:391.00px;font-size:16px;font-weight:700;color:#212529;letter-spacing:-0.100px">Name</div>
<div class="t" id="h3" style="left:696.10px;top:391.00px;font-size:16px;font-weight:700;color:#212529;letter-spacing:-0.167px">Size</div>
<div class="t" id="h4" style="left:805.80px;top:391.00px;font-size:16px;font-weight:700;color:#212529;letter-spacing:-0.170px">Modified at</div>
<div class="t" id="r1n" style="left:409.40px;top:442.00px;font-size:16px;font-weight:700;color:#ffffff;letter-spacing:0.070px">key-ed25519</div>
<div class="t" id="r1s" style="left:696.60px;top:442.00px;font-size:16px;font-weight:400;color:#ffffff;letter-spacing:-0.075px">399 Bytes</div>
<div class="t" id="r1d" style="left:806.80px;top:442.00px;font-size:16px;font-weight:400;color:#ffffff;letter-spacing:0.295px">4/15/2023 6:41:58 AM</div>
<div class="t" id="r2n" style="left:409.40px;top:498.00px;font-size:16px;font-weight:700;color:#ffffff;letter-spacing:-0.058px">key-ed25519-cert.pub</div>
<div class="t" id="r2s" style="left:696.80px;top:498.00px;font-size:16px;font-weight:400;color:#ffffff;letter-spacing:-0.160px">1.2 KB</div>
<div class="t" id="r2d" style="left:805.80px;top:498.00px;font-size:16px;font-weight:400;color:#ffffff;letter-spacing:0.263px">8/21/2023 3:06:17 PM</div>

</body>
</html>
